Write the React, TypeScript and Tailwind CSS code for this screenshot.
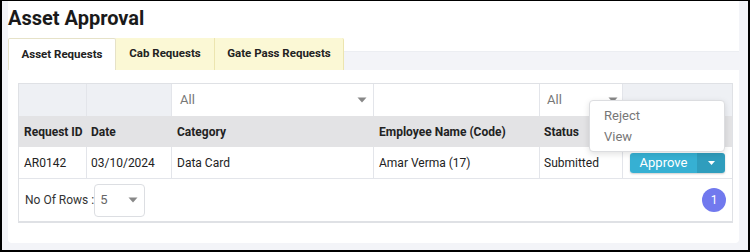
import React from "react";

function Caret({ className = "" }: { className?: string }) {
  return (
    <svg width="10" height="6" viewBox="0 0 10 6" className={className}>
      <path d="M0.5 0.5 L9.5 0.5 L5 5.5 Z" fill="#888" />
    </svg>
  );
}

export default function App() {
  return (
    <div
      className="w-[750px] h-[252px] border-[2px] border-t-[1px] border-black bg-[#f3f4f8] overflow-hidden"
      style={{ fontFamily: "Roboto, 'Noto Sans', sans-serif" }}
    >
      <div className="ml-[6px] mr-[9px] h-[242px] bg-white rounded-b-[4px] flex flex-col">
        <h1 className="text-[20px] leading-[24px] font-bold text-[#1a1a1a] pl-0 pt-[5px] h-[37px]">
          Asset Approval
        </h1>
        {/* tabs */}
        <div className="relative h-[32px] flex">
          <div className="absolute left-0 right-0 bottom-0 h-[19px] bg-[#f3f4f8] border-t border-[#eceef2]" />
          <div className="relative z-10 flex h-[32px]">
            <div className="w-[108px] flex items-center justify-center bg-white border border-b-0 border-[#e6e2c8] text-[11.5px] font-bold text-[#222] rounded-t-[2px]">
              Asset Requests
            </div>
            <div className="w-[99px] flex items-center justify-center bg-[#fbf8d5] border-r border-[#ece5b0] text-[11.5px] font-bold text-[#222]">
              Cab Requests
            </div>
            <div className="w-[129px] flex items-center justify-center bg-[#fbf8d5] border-r border-[#ece5b0] text-[11.5px] font-bold text-[#222] rounded-tr-[2px]">
              Gate Pass Requests
            </div>
          </div>
        </div>
        {/* table container */}
        <div className="mt-[13px] ml-[10px] w-[715px] border border-[#dfe1e5] border-b-2 text-[12px] text-[#222]">
          <div className="grid grid-cols-[68px_85px_202px_166px_83px_1fr]">
            {/* filter row */}
            <div className="h-[32px] bg-[#eef0f4] border-r border-[#e3e5ea]" />
            <div className="h-[32px] bg-[#eef0f4] border-r border-[#e3e5ea]" />
            <div className="h-[32px] bg-white border-r border-[#e3e5ea] flex items-center justify-between pl-[8px] pr-[6px] text-[13px] text-[#777]">
              <span>All</span>
              <Caret />
            </div>
            <div className="h-[32px] bg-white border-r border-[#e3e5ea]" />
            <div className="h-[32px] bg-white border-r border-[#e3e5ea] flex items-center justify-between pl-[7px] pr-[4px] text-[13px] text-[#777]">
              <span>All</span>
              <Caret />
            </div>
            <div className="h-[32px] bg-[#eef0f4]" />
            {/* header row */}
            <div className="h-[31px] bg-[#e3e3e5] flex items-center pl-[5px] font-bold">Request ID</div>
            <div className="h-[31px] bg-[#e3e3e5] flex items-center pl-[4px] font-bold">Date</div>
            <div className="h-[31px] bg-[#e3e3e5] flex items-center pl-[5px] font-bold">Category</div>
            <div className="h-[31px] bg-[#e3e3e5] flex items-center pl-[5px] font-bold">Employee Name (Code)</div>
            <div className="h-[31px] bg-[#e3e3e5] flex items-center pl-[4px] font-bold">Status</div>
            <div className="h-[31px] bg-[#e3e3e5]" />
            {/* data row */}
            <div className="h-[32px] border-r border-b border-[#e3e5ea] flex items-center pl-[5px]">AR0142</div>
            <div className="h-[32px] border-r border-b border-[#e3e5ea] flex items-center pl-[4px]">03/10/2024</div>
            <div className="h-[32px] border-r border-b border-[#e3e5ea] flex items-center pl-[5px]">Data Card</div>
            <div className="h-[32px] border-r border-b border-[#e3e5ea] flex items-center pl-[5px]">Amar Verma (17)</div>
            <div className="h-[32px] border-r border-b border-[#e3e5ea] flex items-center pl-[4px]">Submitted</div>
            <div className="h-[32px] border-b border-[#e3e5ea] relative flex items-center pl-[7px]">
              <div className="flex h-[20px] rounded-[3px] overflow-hidden shadow-[0_1px_2px_rgba(0,0,0,0.2)]">
                <div className="w-[67px] bg-[#36b0d3] text-white text-[13px] flex items-center justify-center">Approve</div>
                <div className="w-[28px] bg-[#2f9dbd] flex items-center justify-center">
                  <svg width="7" height="4" viewBox="0 0 7 4"><path d="M0 0 L7 0 L3.5 4 Z" fill="#fff" /></svg>
                </div>
              </div>
              <div className="absolute left-[-34px] top-[-47px] w-[136px] h-[52px] bg-white border border-[#dcdde0] rounded-[4px] shadow-[0_2px_6px_rgba(0,0,0,0.12)] z-20 flex flex-col justify-center pl-[14px] gap-[5px] text-[13px] text-[#777]">
                <div className="leading-[16px]">Reject</div>
                <div className="leading-[16px]">View</div>
              </div>
            </div>
          </div>
          {/* footer */}
          <div className="h-[42px] flex items-center justify-between pl-[6px] pr-[6px]">
            <div className="flex items-center">
              <span className="text-[12px] text-[#333]">No Of Rows :</span>
              <div className="ml-0 w-[51px] h-[33px] border border-[#dcdee2] rounded-[4px] flex items-center justify-between pl-[5px] pr-[6px] text-[13px] text-[#666]">
                <span>5</span>
                <Caret />
              </div>
            </div>
            <div className="w-[24px] h-[24px] rounded-full bg-[#7179ee] text-white text-[12px] flex items-center justify-center">1</div>
          </div>
        </div>
      </div>
    </div>
  );
}
